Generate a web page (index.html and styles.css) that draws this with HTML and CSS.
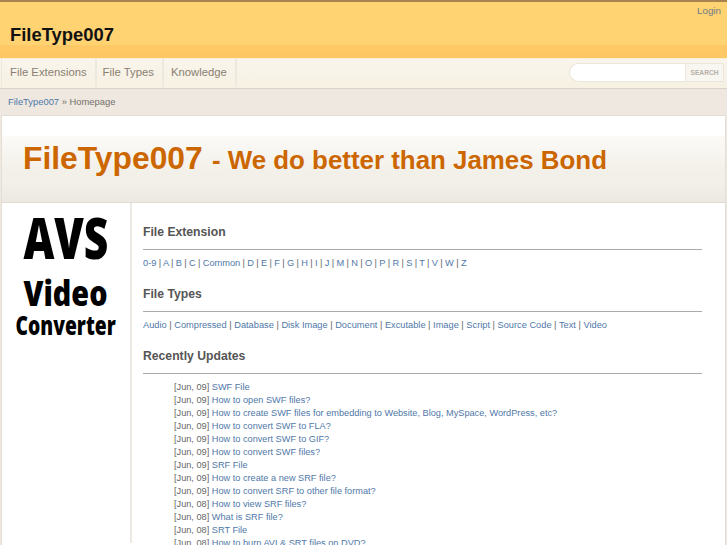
FILE: index.html
```html
<!DOCTYPE html>
<html lang="en">
<head>
<meta charset="utf-8">
<title>FileType007</title>
<link rel="stylesheet" href="styles.css">
</head>
<body>
<header class="top">
  <a class="login" href="#">Login</a>
  <a class="brand" href="#">FileType007</a>
</header>
<nav class="nav">
  <ul class="menu">
    <li><a href="#">File Extensions</a></li>
    <li><a href="#">File Types</a></li>
    <li><a href="#">Knowledge</a></li>
  </ul>
  <form class="search">
    <input class="search-input" type="text" aria-label="Search">
    <button class="search-btn" type="button">SEARCH</button>
  </form>
</nav>
<div class="crumbs"><a href="#">FileType007</a> » Homepage</div>
<main class="page">
  <div class="hero-wrap">
    <h1 class="hero"><span class="hero-big">FileType007</span> - We do better than James Bond</h1>
  </div>
  <div class="columns">
    <aside class="side">
      <div class="ad">
        <span class="ad-avs">AVS</span>
        <span class="ad-video">Video</span>
        <span class="ad-conv">Converter</span>
      </div>
    </aside>
    <section class="content">
      <h2>File Extension</h2>
      <p class="links links-tight"><a href="#">0-9</a> | <a href="#">A</a> | <a href="#">B</a> | <a href="#">C</a> | <a href="#">Common</a> | <a href="#">D</a> | <a href="#">E</a> | <a href="#">F</a> | <a href="#">G</a> | <a href="#">H</a> | <a href="#">I</a> | <a href="#">J</a> | <a href="#">M</a> | <a href="#">N</a> | <a href="#">O</a> | <a href="#">P</a> | <a href="#">R</a> | <a href="#">S</a> | <a href="#">T</a> | <a href="#">V</a> | <a href="#">W</a> | <a href="#">Z</a></p>
      <h2>File Types</h2>
      <p class="links"><a href="#">Audio</a> | <a href="#">Compressed</a> | <a href="#">Database</a> | <a href="#">Disk Image</a> | <a href="#">Document</a> | <a href="#">Excutable</a> | <a href="#">Image</a> | <a href="#">Script</a> | <a href="#">Source Code</a> | <a href="#">Text</a> | <a href="#">Video</a></p>
      <h2>Recently Updates</h2>
      <ul class="updates">
        <li>[Jun, 09] <a href="#">SWF File</a></li>
        <li>[Jun, 09] <a href="#">How to open SWF files?</a></li>
        <li>[Jun, 09] <a href="#">How to create SWF files for embedding to Website, Blog, MySpace, WordPress, etc?</a></li>
        <li>[Jun, 09] <a href="#">How to convert SWF to FLA?</a></li>
        <li>[Jun, 09] <a href="#">How to convert SWF to GIF?</a></li>
        <li>[Jun, 09] <a href="#">How to convert SWF files?</a></li>
        <li>[Jun, 09] <a href="#">SRF File</a></li>
        <li>[Jun, 09] <a href="#">How to create a new SRF file?</a></li>
        <li>[Jun, 09] <a href="#">How to convert SRF to other file format?</a></li>
        <li>[Jun, 08] <a href="#">How to view SRF files?</a></li>
        <li>[Jun, 08] <a href="#">What is SRF file?</a></li>
        <li>[Jun, 08] <a href="#">SRT File</a></li>
        <li>[Jun, 08] <a href="#">How to burn AVI &amp; SRT files on DVD?</a></li>
      </ul>
    </section>
  </div>
</main>
</body>
</html>
```
FILE: styles.css
```css
* { box-sizing: border-box; }
html, body { margin: 0; height: 545px; overflow: hidden; }
body { font-family: "Liberation Sans", Arial, sans-serif; font-size: 10px; background: #eee8e0; color: #666; }
a { color: #4f78a8; text-decoration: none; }

.top { height: 58px; border-top: 2px solid #a98252; background: linear-gradient(#ffd272 0, #ffd272 43px, #fec966 43px, #fdc864 56px); display: flex; flex-direction: column; }
.login { align-self: flex-end; margin: 3px 6px 0 0; font-size: 9.8px; line-height: 12px; color: #6f7b85; }
.brand { margin: 6px 0 0 10px; font-size: 18.4px; font-weight: bold; line-height: 24px; color: #111; }

.nav { height: 31px; display: flex; justify-content: space-between; align-items: flex-start; background: linear-gradient(#f9f5ec, #f7f1e3); border-top: 1px solid #fbeed2; border-bottom: 1px solid #d9d2c8; }
.menu { list-style: none; margin: 0 0 0 1px; padding: 0; display: flex; }
.menu li { height: 28px; padding: 0 7px; border-right: 2px solid #eee9df; line-height: 26px; font-size: 11.3px; }
.menu li:first-child { padding-left: 8px; padding-right: 8px; border-left: 1px solid #eee9df; }
.menu li:last-child { padding-right: 8px; }
.menu li:nth-child(2) { padding-left: 6px; padding-right: 8px; }
.menu a { color: #8a7f72; }

.search { display: flex; margin: 4px 3px 0 0; }
.search-input { width: 116px; height: 19px; padding: 0 6px; border: 1px solid #ebe6dc; border-right: 0; border-radius: 10px 0 0 10px; background: #fff; outline: 0; }
.search-btn { width: 39px; height: 19px; padding: 0; border: 1px solid #ebe6dc; background: #f8f6f1; font: bold 6.6px "Liberation Sans", sans-serif; color: #b5b0a8; }

.crumbs { height: 26px; padding-left: 8px; line-height: 25px; font-size: 9.4px; color: #74706a; }

.page { margin: 0 1px 0 1px; border: 1px solid #e4dfd5; background: #fff; height: 431px; overflow: hidden; }
.hero-wrap { padding-top: 20px; background: #fff; }
.hero { margin: 0; height: 67px; padding: 4px 0 0 21px; font-size: 25.9px; line-height: 36px; font-weight: bold; color: #cc6600; background: linear-gradient(#fbfaf7, #f3f0e9 55%, #f3f0e9 70%, #ece9e2); border-bottom: 1px solid #e0dbd1; white-space: nowrap; }
.hero-big { font-size: 31.8px; margin-right: 2px; }

.columns { display: flex; }
.side { width: 130px; flex: none; border-right: 2px solid #eeeae3; padding-top: 4px; height: 340px; }
.ad { display: flex; flex-direction: column; align-items: center; color: #000; font-family: "Open Sans", sans-serif; font-weight: 800; }
.ad span { display: block; white-space: nowrap; }
.ad-avs { font-size: 56px; line-height: 60px; transform: scaleX(.76); }
.ad-video { font-size: 36px; line-height: 40px; transform: scaleX(.8); margin-top: 6px; }
.ad-conv { font-size: 26px; line-height: 25px; transform: scaleX(.74); }

.content { flex: 1; padding: 21px 23px 0 11px; min-width: 0; }
.content h2 { margin: 0; padding-bottom: 8px; border-bottom: 1px solid #aaa; font-size: 12.2px; line-height: 17px; font-weight: bold; color: #555; }
.links { margin: 6px 0 16px; font-size: 9.25px; line-height: 14px; color: #666; white-space: nowrap; }
.links-tight { word-spacing: -.24px; }
.updates { list-style: none; margin: 7px 0 0; padding: 0 0 0 31px; font-size: 9.2px; line-height: 13px; color: #666; white-space: nowrap; }
```
